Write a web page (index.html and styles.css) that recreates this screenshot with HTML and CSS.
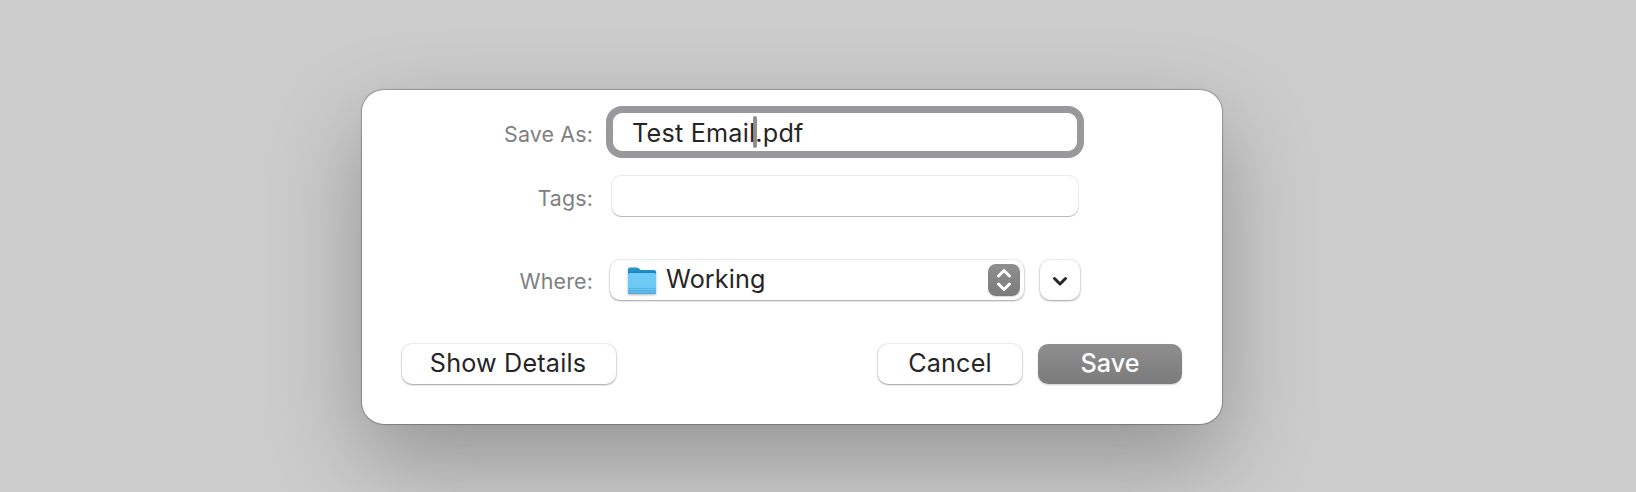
FILE: index.html
```
<!DOCTYPE html>
<html lang="en">
<head>
    <meta charset="UTF-8">
    <meta name="viewport" content="width=device-width, initial-scale=1.0">
    <title>Save</title>
    <link rel="stylesheet" href="styles.css">
</head>
<body>
    <div class="dialog">
        <div class="form">
            <div class="row row-name">
                <span class="label">Save As:</span>
                <div class="name-field"><span class="name-text">Test Email<span class="caret"></span>.pdf</span></div>
            </div>
            <div class="row row-tags">
                <span class="label">Tags:</span>
                <div class="tags-field"></div>
            </div>
            <div class="row row-where">
                <span class="label">Where:</span>
                <div class="popup">
                    <svg class="folder" width="32" height="32" viewBox="0 0 32 32">
                        <defs>
                            <linearGradient id="back" x1="0" y1="0" x2="0" y2="1">
                                <stop offset="0" stop-color="#2f9bd0"/>
                                <stop offset="0.25" stop-color="#147fc0"/>
                                <stop offset="1" stop-color="#147fc0"/>
                            </linearGradient>
                            <linearGradient id="front" x1="0" y1="0" x2="0" y2="1">
                                <stop offset="0" stop-color="#70cbf7"/>
                                <stop offset="0.75" stop-color="#6cc8f5"/>
                                <stop offset="1" stop-color="#52addd"/>
                            </linearGradient>
                        </defs>
                        <path d="M2 27.500V4.500Q2 2.500 4 2.500H10.500Q12 2.500 13 3.500L14 4.500Q14.800 5.100 16 5.100H28.200Q30 5.100 30 7V27.500Q30 29 28.400 29H3.600Q2 29 2 27.500Z" fill="url(#back)"/>
                        <path d="M2 9.500Q2 8 3.500 8H28.500Q30 8 30 9.500V27.500Q30 29 28.400 29H3.600Q2 29 2 27.500Z" fill="url(#front)"/>
                        <path d="M2.500 23.500H29.500M2.500 25.500H29.500" stroke="#4ba5d7" stroke-width="0.6"/>
                    </svg>
                    <span class="popup-text">Working</span>
                    <span class="stepper">
                        <svg width="32" height="32" viewBox="0 0 32 32" fill="none" stroke="#fff" stroke-width="3" stroke-linecap="round" stroke-linejoin="round">
                            <path d="M10.500 12L16 6.500L21.500 12M10.500 20L16 25.500L21.500 20"/>
                        </svg>
                    </span>
                </div>
                <div class="expand">
                    <svg width="40" height="40" viewBox="0 0 40 40" fill="none" stroke="#262626" stroke-width="3" stroke-linecap="round" stroke-linejoin="round">
                        <path d="M14.500 18.500L20 24L25.500 18.500"/>
                    </svg>
                </div>
            </div>
        </div>
        <div class="actions">
            <button class="btn btn-details">Show Details</button>
            <button class="btn btn-cancel">Cancel</button>
            <button class="btn btn-save">Save</button>
        </div>
    </div>
</body>
</html>
```
FILE: styles.css
```
* {
    box-sizing: border-box;
}

body {
    margin: 0;
    height: 492px;
    padding: 90px 0 0 362px;
    overflow: hidden;
    background-color: #ccc;
    font-family: Inter, 'Liberation Sans', sans-serif;
    color: #262626;
}

.dialog {
    display: flex;
    flex-direction: column;
    justify-content: space-between;
    width: 860px;
    height: 334px;
    padding: 16px 40px 40px;
    border-radius: 22px;
    background-color: #fff;
    box-shadow: 0 0 1px 1px rgba(0, 0, 0, 0.25), 0 36px 92px rgba(0, 0, 0, 0.28);
}

.row {
    display: flex;
    align-items: center;
}

.label {
    width: 191px;
    color: #808080;
    font-size: 21.4px;
    letter-spacing: 0.15px;
    line-height: 30px;
    text-align: right;
    white-space: nowrap;
}

.row-name .label {
    padding-top: 3px;
}

.name-field {
    display: flex;
    align-items: center;
    width: 478px;
    height: 52px;
    margin-left: 13px;
    padding: 2px 0 0 19px;
    border: 7px solid #99989d;
    border-radius: 16px;
    font-size: 25.2px;
    letter-spacing: 0.22px;
    line-height: 36px;
}

.name-text {
    white-space: nowrap;
}

.caret {
    position: absolute;
    width: 4px;
    height: 32px;
    margin: 1px 0 0 -2px;
    border-radius: 2px;
    background-color: rgba(115, 115, 115, 0.8);
}

.row-tags {
    margin-top: 18px;
}

.row-tags .label {
    padding-top: 4px;
}

.tags-field {
    width: 466px;
    height: 40px;
    margin-left: 19px;
    border-radius: 9px;
    box-shadow: 0 1px 0 rgba(0, 0, 0, 0.2), 0 0 0 1px #e9e9e9;
    background-color: #fff;
}

.row-where {
    margin-top: 44px;
}

.row-where .label {
    padding-top: 1px;
}

.popup,
.expand,
.btn {
    height: 40px;
    border: none;
    border-radius: 10px;
    background-color: #fff;
    box-shadow: 0 0 1px 1px rgba(0, 0, 0, 0.07), 0 1px 2px rgba(0, 0, 0, 0.32);
}

.popup {
    display: flex;
    align-items: center;
    width: 414px;
    margin-left: 17px;
    padding: 0 4px 0 16px;
}

.folder {
    margin-top: 2px;
    filter: drop-shadow(0 1px 1px rgba(0, 0, 0, 0.3));
}

.popup-text {
    flex: 1;
    margin: 0 0 2px 8px;
    font-size: 25.2px;
    letter-spacing: 0.1px;
    line-height: 36px;
}

.stepper {
    width: 32px;
    height: 32px;
    border-radius: 8px;
    background: linear-gradient(#8f8f8f, #7b7b7b);
    box-shadow: 0 1px 1px rgba(0, 0, 0, 0.15);
}

.expand {
    width: 40px;
    margin-left: 16px;
}

.stepper svg,
.expand svg {
    display: block;
}

.actions {
    display: flex;
}

.btn {
    padding: 0 0 2px;
    color: #262626;
    font-family: inherit;
    font-size: 25.2px;
    letter-spacing: 0.17px;
    line-height: 36px;
}

.btn-details {
    width: 214px;
    margin-right: auto;
    padding-right: 2px;
}

.btn-cancel {
    width: 144px;
    margin-right: 16px;
}

.btn-save {
    width: 144px;
    color: #fff;
    font-weight: 500;
    letter-spacing: 0;
    background: linear-gradient(#8f8f8f, #7b7b7b);
    box-shadow: 0 1px 2px rgba(0, 0, 0, 0.2);
}
```
